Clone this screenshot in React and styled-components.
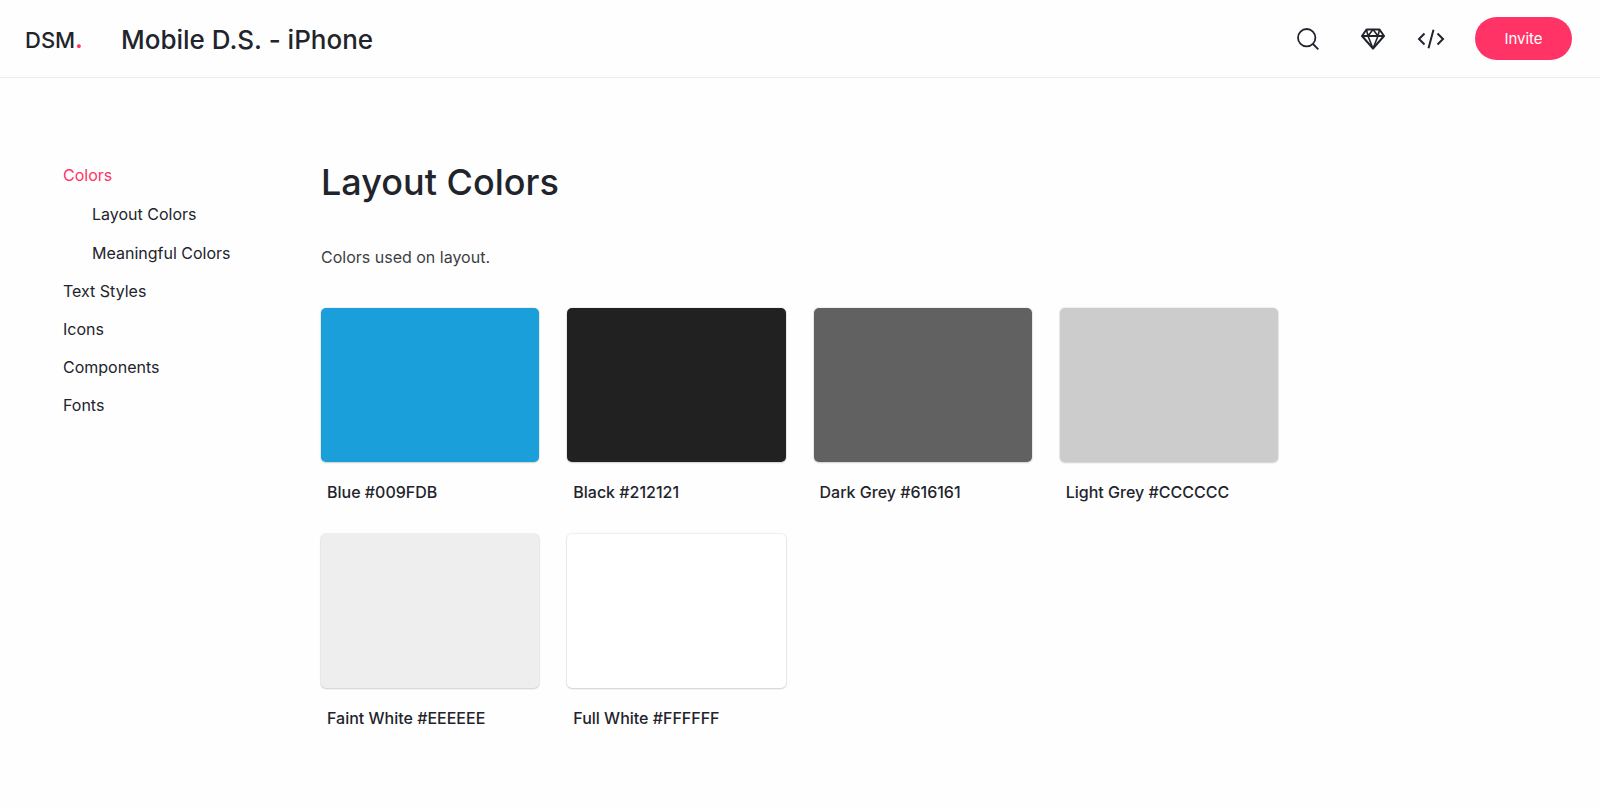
import React from "react";
import styled, { createGlobalStyle } from "styled-components";

const ink = "#22242c";
const accent = "#ff3366";

const GlobalStyle = createGlobalStyle`
  *, *::before, *::after { box-sizing: border-box; }
  body {
    margin: 0;
    background: #fefefe;
    color: ${ink};
    font-family: Inter, "Liberation Sans", sans-serif;
    font-size: 16px;
    line-height: 24px;
  }
`;

const Header = styled.header`
  display: flex;
  align-items: center;
  height: 78px;
  padding: 0 28px 0 25px;
  border-bottom: 1px solid #ebebec;
`;

const Logo = styled.a`
  width: 96px;
  padding-top: 2px;
  color: ${ink};
  font-size: 22px;
  font-weight: 500;
  line-height: 32px;
  text-decoration: none;
`;

const Dot = styled.span`
  color: ${accent};
  font-weight: 700;
`;

const ProductName = styled.h2`
  flex: 1;
  margin: 0;
  padding-top: 2px;
  font-size: 26px;
  font-weight: 500;
  line-height: 32px;
`;

const Actions = styled.div`
  display: flex;
  align-items: center;
  gap: 30px;
`;

const IconButton = styled.button`
  display: flex;
  align-items: center;
  justify-content: center;
  width: ${({ $wide }) => ($wide ? 42 : 28)}px;
  height: 32px;
  padding: 0;
  border: 0;
  background: none;
  color: ${ink};
  cursor: pointer;
`;

const InviteButton = styled.button`
  width: 97px;
  height: 43px;
  border: 0;
  border-radius: 22px;
  background: ${accent};
  color: #fff;
  font: inherit;
  font-size: 15px;
  cursor: pointer;
`;

const Page = styled.div`
  display: flex;
  align-items: flex-start;
  padding: 80px 63px 64px;
`;

const Sidebar = styled.nav`
  flex: 0 0 258px;
  padding-top: 5px;
`;

const NavList = styled.ul`
  display: flex;
  flex-direction: column;
  gap: 14px;
  margin: 0;
  padding: 0;
  list-style: none;
`;

const SubList = styled(NavList)`
  gap: 15px;
  padding: 15px 0 0 29px;
`;

const NavLink = styled.a`
  display: block;
  color: ${({ $active }) => ($active ? accent : ink)};
  text-decoration: none;
`;

const Main = styled.main`
  flex: 1;
  max-width: 957px;
`;

const Title = styled.h1`
  margin: 0;
  font-size: 36px;
  font-weight: 500;
  line-height: 48px;
`;

const Intro = styled.p`
  margin: 39px 0 39px;
  color: #3c3e45;
`;

const Swatches = styled.ul`
  display: grid;
  grid-template-columns: repeat(4, minmax(0, 1fr));
  gap: 30px 28px;
  margin: 0;
  padding: 0;
  list-style: none;
`;

const Swatch = styled.li`
  display: flex;
  flex-direction: column;
  gap: 18px;
`;

const Chip = styled.div`
  height: 154px;
  border-radius: 5px;
  background: ${({ $color }) => $color};
  box-shadow: 0 0 1px 1px rgba(0, 0, 0, 0.06), 0 1px 2px rgba(0, 0, 0, 0.14);
`;

const SwatchName = styled.span`
  padding-left: 6px;
  font-weight: 500;
`;

const swatches = [
  { name: "Blue", hex: "#009FDB", fill: "#1b9fda" },
  { name: "Black", hex: "#212121", fill: "#212121" },
  { name: "Dark Grey", hex: "#616161", fill: "#616161" },
  { name: "Light Grey", hex: "#CCCCCC", fill: "#cccccc" },
  { name: "Faint White", hex: "#EEEEEE", fill: "#eeeeee" },
  { name: "Full White", hex: "#FFFFFF", fill: "#ffffff" },
];

const sections = [
  { label: "Colors", active: true, children: ["Layout Colors", "Meaningful Colors"] },
  { label: "Text Styles" },
  { label: "Icons" },
  { label: "Components" },
  { label: "Fonts" },
];

const SearchIcon = () => (
  <svg width="22" height="22" viewBox="0 0 22 22" fill="none" stroke="currentColor" strokeWidth="1.8" aria-hidden="true">
    <circle cx="9.7" cy="9.7" r="8.7" />
    <path d="M16 16l5.3 5.3" />
  </svg>
);

const DiamondIcon = () => (
  <svg width="24" height="22" viewBox="0 0 24 22" fill="none" stroke="currentColor" strokeWidth="2" strokeLinejoin="round" aria-hidden="true">
    <path d="M5.500 1.500h13L23 8 12 20.500 1 8z" />
    <path d="M1 8h22" />
    <path strokeWidth="1.6" d="M5.500 1.500L7 8l5 12.500L17 8l1.500-6.500M7 8l5-6.500L17 8" />
  </svg>
);

const CodeIcon = () => (
  <svg width="28" height="20" viewBox="0 0 28 20" fill="none" stroke="currentColor" strokeWidth="2" aria-hidden="true">
    <path d="M7.500 4.500L2 10l5.500 5.500M20.500 4.500L26 10l-5.500 5.500M16.500.8L11.500 19.200" />
  </svg>
);

export default function App() {
  return (
    <>
      <GlobalStyle />
      <Header>
        <Logo href="#home">
          DSM<Dot>.</Dot>
        </Logo>
        <ProductName>Mobile D.S. - iPhone</ProductName>
        <Actions>
          <IconButton $wide aria-label="Search"><SearchIcon /></IconButton>
          <IconButton aria-label="Design files"><DiamondIcon /></IconButton>
          <IconButton aria-label="Code"><CodeIcon /></IconButton>
          <InviteButton>Invite</InviteButton>
        </Actions>
      </Header>
      <Page>
        <Sidebar aria-label="Sections">
          <NavList>
            {sections.map(({ label, active, children }) => (
              <li key={label}>
                <NavLink href={"#" + label} $active={active}>{label}</NavLink>
                {children && (
                  <SubList>
                    {children.map((child) => (
                      <li key={child}>
                        <NavLink href={"#" + child}>{child}</NavLink>
                      </li>
                    ))}
                  </SubList>
                )}
              </li>
            ))}
          </NavList>
        </Sidebar>
        <Main>
          <Title>Layout Colors</Title>
          <Intro>Colors used on layout.</Intro>
          <Swatches>
            {swatches.map(({ name, hex, fill }) => (
              <Swatch key={name}>
                <Chip $color={fill} />
                <SwatchName>{name} {hex}</SwatchName>
              </Swatch>
            ))}
          </Swatches>
        </Main>
      </Page>
    </>
  );
}
